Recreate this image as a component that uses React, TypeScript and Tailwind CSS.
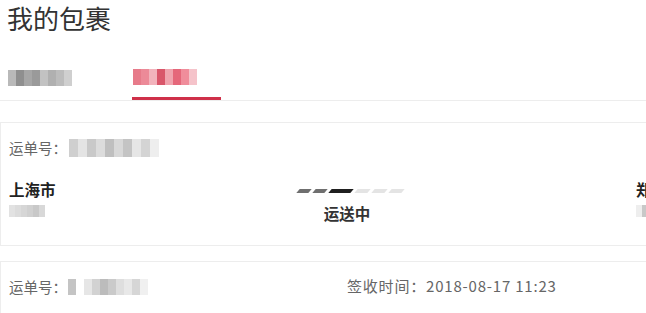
import React from "react";

const font = { fontFamily: '"Noto Sans CJK SC", "Noto Sans", sans-serif' };

// pixelated blocks standing in for the blurred text in the screenshot
const Mosaic = ({ cells, size = 8, className = "" }: { cells: string[]; size?: number; className?: string }) => (
  <div className={`flex blur-[0.6px] ${className}`}>
    {cells.map((c, i) => (
      <div key={i} style={{ width: size, height: size * 2, background: c }} />
    ))}
  </div>
);

const Dashes = () => {
  const segs = [
    { w: 12, c: "#6f6f6f" },
    { w: 12, c: "#6f6f6f" },
    { w: 22, c: "#1f1f1f" },
    { w: 13, c: "#e4e4e4" },
    { w: 13, c: "#e4e4e4" },
    { w: 13, c: "#e4e4e4" },
  ];
  return (
    <div className="flex gap-[4px]">
      {segs.map((s, i) => (
        <div key={i} className="h-[4px] -skew-x-[40deg]" style={{ width: s.w, background: s.c }} />
      ))}
    </div>
  );
};

export default function App() {
  return (
    <div className="w-[646px] h-[313px] overflow-hidden bg-white" style={font}>
      <div className="w-[760px]">
        <div className="h-[38px] pl-[7px] pt-[1px]">
          <h1 className="text-[26px] leading-[34px] text-[#333]">我的包裹</h1>
        </div>

        <div className="flex h-[63px] items-end border-b border-[#ededed]">
          <div className="w-[132px] h-full flex items-center pl-[8px] pt-[18px]">
            <Mosaic cells={["#b9b9b9", "#8f8f8f", "#a6a6a6", "#9a9a9a", "#c2c2c2", "#b0b0b0", "#bcbcbc", "#cfcfcf"]} />
          </div>
          <div className="w-[89px] h-full flex flex-col">
            <div className="flex-1 flex items-center pl-[1px] pt-[18px]">
              <Mosaic cells={["#e77b8a", "#ec8a98", "#f2b3bc", "#d9566a", "#f0a3ae", "#e5677a", "#f08d9b", "#f5c3ca"]} />
            </div>
            <div className="h-[3px] bg-[#cf3049]" />
          </div>
        </div>

        <div className="h-[21px]" />

        <div className="h-[124px] border-t border-b border-l border-[#ededed] pl-[8px]">
          <div className="flex items-center h-[50px] text-[14.5px] text-[#666]">
            <span>运单号：</span>
            <Mosaic size={9} className="ml-[2px]" cells={["#cfcfcf", "#e4e4e4", "#c9c9c9", "#dcdcdc", "#bfbfbf", "#d8d8d8", "#c4c4c4", "#e6e6e6", "#d4d4d4", "#eeeeee"]} />
          </div>
          <div className="flex">
            <div className="w-[270px] pt-[5px]">
              <div className="text-[15.5px] font-bold text-[#222] leading-[22px]">上海市</div>
              <Mosaic size={6} className="mt-[5px]" cells={["#e2e2e2", "#dcdcdc", "#d6d6d6", "#d0d0d0", "#c8c8c8", "#d8d8d8"]} />
            </div>
            <div className="w-[140px] flex flex-col items-center pt-[16px]">
              <div className="ml-[2px]"><Dashes /></div>
              <div className="mt-[10px] -ml-[4px] text-[15.5px] font-bold text-[#333] leading-[20px]">运送中</div>
            </div>
            <div className="flex-1 pl-[217px] pt-[5px]">
              <div className="text-[15.5px] font-bold text-[#222] leading-[22px]">郑州市</div>
              <Mosaic size={6} className="mt-[5px]" cells={["#eeeeee", "#c8c8c8", "#d0d0d0", "#d8d8d8"]} />
            </div>
          </div>
        </div>

        <div className="h-[15px]" />

        <div className="h-[60px] border-t border-l border-[#ededed] pl-[8px] flex items-center text-[14.5px] text-[#666] pb-[10px]">
          <div className="w-[338px] flex items-center">
            <span>运单号：</span>
            <Mosaic size={8} className="ml-[1px]" cells={["#c4c4c4", "#ffffff", "#e6e6e6", "#d2d2d2", "#bcbcbc", "#cacaca", "#dedede", "#e8e8e8", "#d6d6d6", "#f0f0f0"]} />
          </div>
          <span className="text-[15px] tracking-[0.8px]">签收时间：2018-08-17 11:23</span>
        </div>
      </div>
    </div>
  );
}
